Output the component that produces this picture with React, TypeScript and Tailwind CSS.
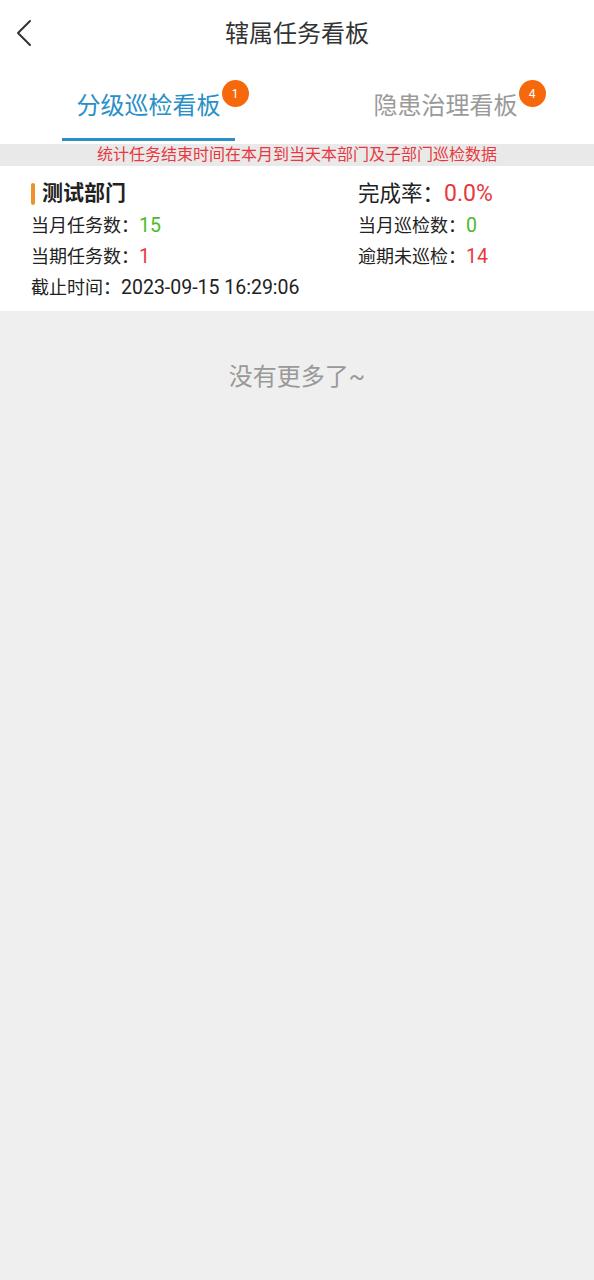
import React from "react";

const font = { fontFamily: '"Roboto", "Noto Sans CJK SC", sans-serif' };

function Stat({ label, value, color }: { label: string; value: string; color: string }) {
  return (
    <div className="flex items-center text-[18px] leading-[31px] text-[#222]">
      <span>{label}：</span>
      <span className={`text-[19.5px] ${color}`}>{value}</span>
    </div>
  );
}

export default function App() {
  return (
    <div style={font} className="flex min-h-[1280px] w-[594px] flex-col bg-[#efefef]">
      {/* header */}
      <div className="relative flex h-[68px] items-center justify-center bg-white">
        <button className="absolute left-[9px] top-[18px] flex size-[30px] items-center justify-center">
          <svg width="18" height="28" viewBox="0 0 18 28" fill="none">
            <path d="M15 2 L3 14 L15 26" stroke="#333" strokeWidth="2" strokeLinecap="round" strokeLinejoin="round" />
          </svg>
        </button>
        <span className="text-[24px] text-[#333]">辖属任务看板</span>
      </div>

      {/* tabs */}
      <div className="flex h-[76px] bg-white">
        <div className="flex flex-1 flex-col items-center">
          <div className="relative mt-[22px] text-[24px] leading-[32px] text-[#2a8fc8]">
            分级巡检看板
            <span className="absolute -right-[28px] -top-[10px] flex size-[27px] items-center justify-center rounded-full bg-[#f5690c] text-[12px] leading-none text-white">
              1
            </span>
          </div>
          <div className="mt-auto mb-[3px] h-[3px] w-[173px] bg-[#2a8fc8]" />
        </div>
        <div className="flex flex-1 flex-col items-center">
          <div className="relative mt-[22px] text-[24px] leading-[32px] text-[#9a9a9a]">
            隐患治理看板
            <span className="absolute -right-[28px] -top-[10px] flex size-[27px] items-center justify-center rounded-full bg-[#f5690c] text-[12px] leading-none text-white">
              4
            </span>
          </div>
        </div>
      </div>

      {/* notice */}
      <div className="flex h-[22px] items-center justify-center bg-[#e9e9e9] text-[16px] leading-none text-[#e8383d]">
        统计任务结束时间在本月到当天本部门及子部门巡检数据
      </div>

      {/* card */}
      <div className="flex bg-white px-[31px] pb-[8px] pt-[12px]">
        <div className="flex flex-1 flex-col">
          <div className="flex h-[32px] items-center">
            <span className="mr-[7px] h-[22px] w-[4px] rounded-full bg-[#f0922a]" />
            <span className="text-[21px] font-bold text-[#222]">测试部门</span>
          </div>
          <Stat label="当月任务数" value="15" color="text-[#4cb92b]" />
          <Stat label="当期任务数" value="1" color="text-[#e8383d]" />
          <Stat label="截止时间" value="2023-09-15 16:29:06" color="text-[#222]" />
        </div>
        <div className="flex w-[205px] flex-col">
          <div className="flex h-[32px] items-center text-[21.5px] text-[#222]">
            <span>完成率：</span>
            <span className="text-[23px] text-[#e8383d]">0.0%</span>
          </div>
          <Stat label="当月巡检数" value="0" color="text-[#4cb92b]" />
          <Stat label="逾期未巡检" value="14" color="text-[#e8383d]" />
        </div>
      </div>

      <div className="pt-[53px] text-center text-[24px] leading-[26px] text-[#999]">没有更多了~</div>
    </div>
  );
}
